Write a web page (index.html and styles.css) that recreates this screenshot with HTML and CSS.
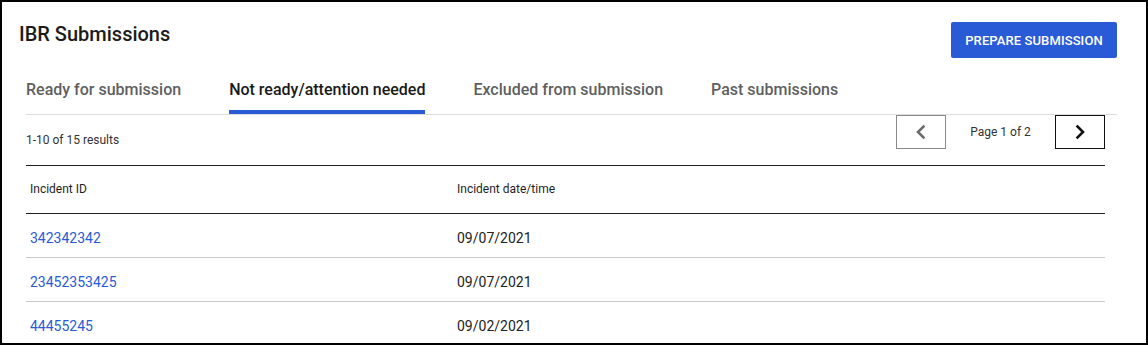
FILE: index.html
```html
<!DOCTYPE html>
<html>
  <head>
    <link rel="stylesheet" href="styles.css">
  </head>
  <body>
    <div class="frame">
      <header class="head">
        <h1>IBR Submissions</h1>
        <button class="primary">PREPARE SUBMISSION</button>
      </header>

      <nav class="tabs">
        <a class="tab">Ready for submission</a>
        <a class="tab active">Not ready/attention needed</a>
        <a class="tab">Excluded from submission</a>
        <a class="tab">Past submissions</a>
      </nav>

      <section class="results">
        <div class="toolbar">
          <span class="count">1-10 of 15 results</span>
          <div class="pager">
            <button class="page-btn prev" aria-label="Previous page">
              <svg width="14" height="16" viewBox="0 0 14 16"><polyline points="9.5,2.5 4,8 9.5,13.5" /></svg>
            </button>
            <span class="page-label">Page 1 of 2</span>
            <button class="page-btn next" aria-label="Next page">
              <svg width="14" height="16" viewBox="0 0 14 16"><polyline points="4.5,2.5 10,8 4.5,13.5" /></svg>
            </button>
          </div>
        </div>

        <table>
          <thead>
            <tr><th class="col-id">Incident ID</th><th>Incident date/time</th></tr>
          </thead>
          <tbody>
            <tr><td><a href="#">342342342</a></td><td>09/07/2021</td></tr>
            <tr><td><a href="#">23452353425</a></td><td>09/07/2021</td></tr>
            <tr><td><a href="#">44455245</a></td><td>09/02/2021</td></tr>
          </tbody>
        </table>
      </section>
    </div>
  </body>
</html>
```

FILE: styles.css
```css
/* mini reset */
* { margin: 0; padding: 0; box-sizing: border-box; }

body {
  font-family: Roboto, "Liberation Sans", Arial, sans-serif;
  color: #1f1f1f;
  background: #fff;
}

/* outer frame */
.frame {
  width: 1148px;
  height: 345px;
  border: 2px solid #000;
  padding: 0 29px 0 17px;
  overflow: hidden;
  background: #fff;
}

/* title + primary action */
.head {
  display: flex;
  justify-content: space-between;
  align-items: flex-start;
  padding-top: 20px;
}
.head h1 {
  font-size: 20px;
  line-height: 24px;
  font-weight: 500;
  color: #1b1b1b;
}
.primary {
  width: 166px;
  height: 36px;
  border: none;
  border-radius: 2px;
  background: #2a5bd7;
  color: #fff;
  font-family: inherit;
  font-size: 13px;
  font-weight: 500;
  letter-spacing: 0.1px;
}

/* tabs */
.tabs {
  display: flex;
  gap: 48px;
  margin-left: 7px;
  border-bottom: 1px solid #dcdcdc;
}
.tab {
  padding: 22px 0 10px;
  border-bottom: 4px solid transparent;
  font-size: 16px;
  line-height: 20px;
  font-weight: 500;
  color: #5f5f5f;
}
.tab.active { color: #1a1a1a; border-bottom-color: #2a5bd7; }

/* results */
.results { margin: 0 12px 0 7px; }

.toolbar {
  display: flex;
  justify-content: space-between;
  align-items: flex-end;
}
.count {
  font-size: 12px;
  line-height: 16px;
  color: #333;
  margin-bottom: 1px;
}
.pager { display: flex; align-items: center; }
.page-btn {
  width: 50px;
  height: 34px;
  background: #fff;
  display: flex;
  align-items: center;
  justify-content: center;
}
.page-btn svg { fill: none; stroke-width: 2.6; stroke-linecap: square; }
.prev { border: 1px solid #8a8a8a; }
.prev svg { stroke: #6b6b6b; }
.next { border: 1px solid #111; }
.next svg { stroke: #111; }
.page-label {
  width: 109px;
  text-align: center;
  font-size: 12px;
  color: #333;
}

/* table */
table {
  width: 100%;
  margin-top: 16px;
  border-collapse: collapse;
  border-top: 1px solid #222;
}
th {
  text-align: left;
  font-size: 12px;
  line-height: 16px;
  font-weight: 400;
  color: #1f1f1f;
  padding: 15px 4px 16px;
  border-bottom: 1px solid #222;
}
.col-id { width: 427px; }
td {
  font-size: 14px;
  line-height: 20px;
  color: #222;
  padding: 14px 4px 9px;
  border-bottom: 1px solid #c9c9c9;
}
td a { color: #2a5bd7; text-decoration: none; }
```
